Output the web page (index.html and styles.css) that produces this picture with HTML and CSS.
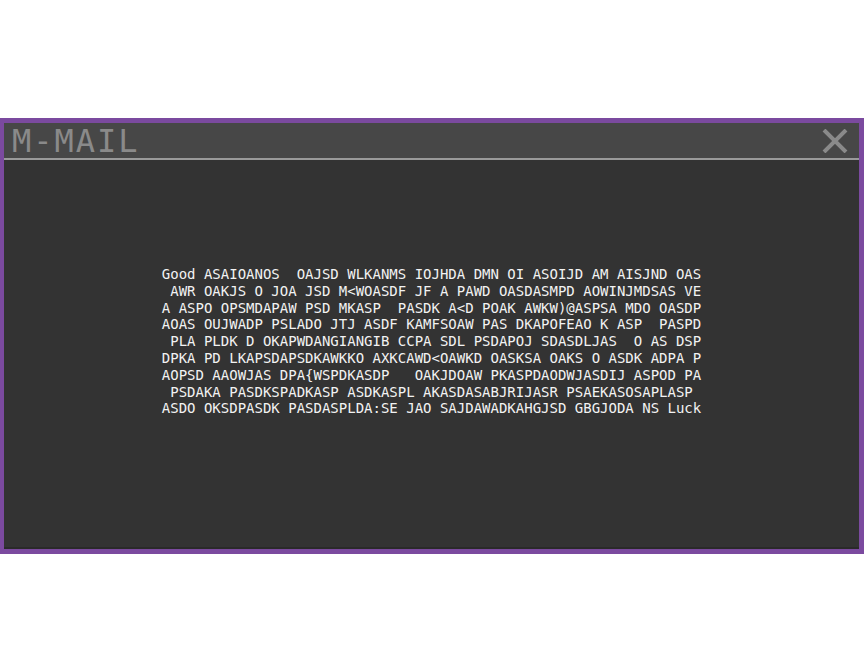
FILE: index.html
```html
<!DOCTYPE html>
<html>
<head>
<meta charset="utf-8">
<link rel="stylesheet" href="styles.css">
</head>
<body>
<div class="page">
  <div class="window">
    <div class="titlebar">
      <span class="title">M-MAIL</span>
      <svg class="close" width="26" height="24" viewBox="0 0 26 24">
        <path d="M2 1 L24 23 M24 1 L2 23" stroke="#8a8a8a" stroke-width="4" fill="none"/>
      </svg>
    </div>
    <div class="content">
      <pre class="message">Good ASAIOANOS  OAJSD WLKANMS IOJHDA DMN OI ASOIJD AM AISJND OAS
 AWR OAKJS O JOA JSD M&lt;WOASDF JF A PAWD OASDASMPD AOWINJMDSAS VE
A ASPO OPSMDAPAW PSD MKASP  PASDK A&lt;D POAK AWKW)@ASPSA MDO OASDP
AOAS OUJWADP PSLADO JTJ ASDF KAMFSOAW PAS DKAPOFEAO K ASP  PASPD
 PLA PLDK D OKAPWDANGIANGIB CCPA SDL PSDAPOJ SDASDLJAS  O AS DSP
DPKA PD LKAPSDAPSDKAWKKO AXKCAWD&lt;OAWKD OASKSA OAKS O ASDK ADPA P
AOPSD AAOWJAS DPA{WSPDKASDP   OAKJDOAW PKASPDAODWJASDIJ ASPOD PA
 PSDAKA PASDKSPADKASP ASDKASPL AKASDASABJRIJASR PSAEKASOSAPLASP
ASDO OKSDPASDK PASDASPLDA:SE JAO SAJDAWADKAHGJSD GBGJODA NS Luck</pre>
    </div>
  </div>
</div>
</body>
</html>
```

FILE: styles.css
```css
html, body {
  margin: 0;
  padding: 0;
  background: #ffffff;
}

.page {
  padding-top: 118px;
}

.window {
  height: 436px;
  box-sizing: border-box;
  border: 5px solid #7b4a9f;
  border-left-width: 4px;
  background: #333333;
  display: flex;
  flex-direction: column;
}

.titlebar {
  height: 35px;
  background: #474747;
  border-bottom: 2px solid #9a9a9a;
  display: flex;
  align-items: center;
  justify-content: space-between;
  padding: 0 11px 0 8px;
  flex-shrink: 0;
}

.title {
  font-family: "DejaVu Sans Mono", "Liberation Mono", monospace;
  font-size: 32px;
  letter-spacing: 2px;
  color: #8a8a8a;
  line-height: 35px;
  padding-top: 2px;
}

.close {
  display: block;
  margin-top: 1px;
}

.content {
  flex: 1;
  display: flex;
  justify-content: center;
  padding-top: 106px;
  box-shadow: inset 0 -2px 0 #2a2a2a;
}

.message {
  margin: 0;
  font-family: "DejaVu Sans Mono", "Liberation Mono", monospace;
  font-size: 14px;
  line-height: 16.8px;
  color: #f2f2f2;
  white-space: pre;
}
```
